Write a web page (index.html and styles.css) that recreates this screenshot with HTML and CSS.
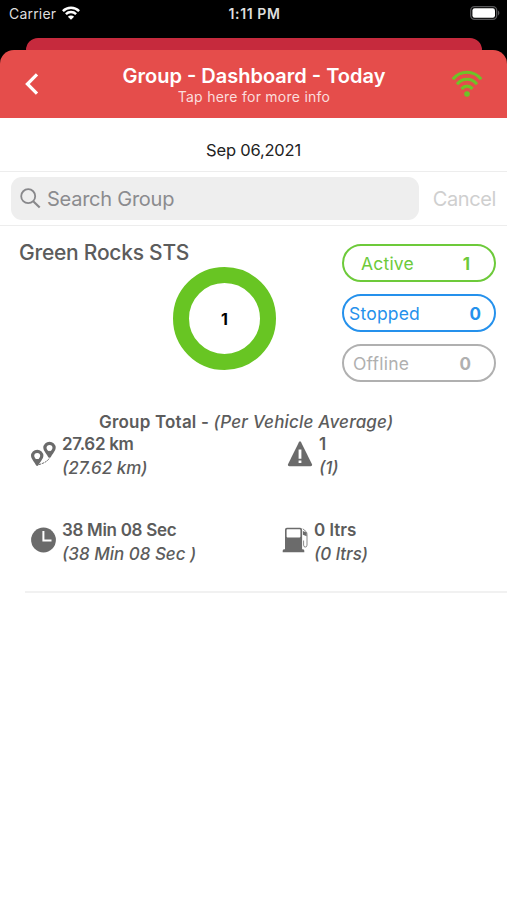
FILE: index.html
```html
<!DOCTYPE html>
<html lang="en">
<head>
    <meta charset="UTF-8">
    <meta name="viewport" content="width=device-width, initial-scale=1.0">
    <title>Group - Dashboard - Today</title>
    <link rel="stylesheet" href="styles.css">
</head>
<body>
    <div class="screen">
        <div class="status-bar">
            <div class="carrier">
                <span class="carrier-name">Carrier</span>
                <svg class="status-wifi" width="18" height="14" viewBox="0 0 18 14" fill="none" stroke="#fff" stroke-width="2.5">
                    <path d="M.9 5.1a11.6 11.6 0 0 1 16.2 0"/>
                    <path d="M3.9 8.2a7.3 7.3 0 0 1 10.2 0"/>
                    <path d="M9 13.8 5.9 10.7a4.4 4.4 0 0 1 6.2 0z" fill="#fff" stroke="none"/>
                </svg>
            </div>
            <span class="time">1:11 PM</span>
            <svg class="battery" width="30" height="14" viewBox="0 0 30 14">
                <rect x=".7" y=".7" width="26" height="12.6" rx="3.8" fill="none" stroke="#58585a" stroke-width="1.3"/>
                <rect x="2.4" y="2.3" width="22.6" height="9.4" rx="2.2" fill="#fff"/>
                <path d="M28 4.6c1.8.7 1.8 4.1 0 4.8z" fill="#58585a"/>
            </svg>
        </div>

        <div class="back-card"></div>

        <header class="nav">
            <svg class="nav-back" width="14" height="22" viewBox="0 0 14 22" fill="none" stroke="#fff" stroke-width="3.2">
                <path d="M12 1.4 2.4 11l9.6 9.6"/>
            </svg>
            <div class="nav-titles">
                <h1 class="nav-title">Group - Dashboard - Today</h1>
                <span class="nav-subtitle">Tap here for more info</span>
            </div>
            <svg class="nav-wifi" width="32" height="28" viewBox="0 0 32 28" fill="none" stroke="#6ec328" stroke-width="3.2">
                <path d="M1.8 9.2C9.6-.1 22.4-.1 30.2 9.2"/>
                <path d="M6 14.2c5.8-6.600 14.200-6.600 20 0"/>
                <path d="M10.500 18.800c3.300-3.600 7.700-3.600 11 0"/>
                <circle cx="16" cy="24" r="2.800" fill="#6ec328" stroke="none"/>
            </svg>
        </header>

        <div class="date"><span class="date-text">Sep 06,2021</span></div>

        <div class="search">
            <div class="search-field">
                <svg width="21" height="21" viewBox="0 0 21 21" fill="none" stroke="#88888b" stroke-width="1.8">
                    <circle cx="8.2" cy="8.2" r="7"/>
                    <path d="m13.2 13.2 6.5 6.3" stroke-width="2.2"/>
                </svg>
                <span class="search-text">Search Group</span>
            </div>
            <span class="cancel">Cancel</span>
        </div>

        <main class="group">
            <div class="overview">
                <h2 class="group-name">Green Rocks STS</h2>
                <div class="donut"><span>1</span></div>
                <div class="pills">
                    <div class="pill active"><span>Active</span><b>1</b></div>
                    <div class="pill stopped"><span>Stopped</span><b>0</b></div>
                    <div class="pill offline"><span>Offline</span><b>0</b></div>
                </div>
            </div>

            <p class="total-title"><b>Group Total - </b><i>(Per Vehicle Average)</i></p>

            <div class="stats">
                <div class="stat distance">
                    <svg width="26" height="26" viewBox="0 0 26 26" fill="none" stroke="#6b6b6b">
                        <path stroke-width="3.2" stroke-linejoin="round" d="M7.200 10.400a4.600 4.600 0 0 0-4.600 4.600c0 3 3.200 4.600 4.600 8.300 1.400-3.700 4.600-5.300 4.600-8.300a4.600 4.600 0 0 0-4.600-4.600z"/>
                        <path stroke-width="3.2" stroke-linejoin="round" d="M19.500 2.300a4.600 4.600 0 0 0-4.600 4.600c0 3 3.200 4.600 4.600 8.300 1.400-3.700 4.600-5.300 4.600-8.300a4.600 4.600 0 0 0-4.600-4.600z"/>
                        <path d="M5 18.500h4.400L7.200 23zM17.300 10.400h4.400l-2.200 4.500z" fill="#6b6b6b"/>
                        <path d="M9 23.600c5-1.500 8.500-3.200 10.400-6.500" stroke-dasharray="2.200 .8"/>
                    </svg>
                    <div class="stat-text"><b>27.62 km</b><i>(27.62 km)</i></div>
                </div>
                <div class="stat alerts">
                    <svg width="26" height="26" viewBox="0 0 26 26">
                        <path d="M11.900 1.200q1.100-1.700 2.200 0L25 23.200q.6 2-1.300 2H2.300q-1.900 0-1.300-2z" fill="#6b6b6b"/>
                        <path d="M11.600 8.500h2.800v9.200h-2.800zM11.600 19.400h2.800v2.600h-2.800z" fill="#fff"/>
                    </svg>
                    <div class="stat-text"><b>1</b><i>(1)</i></div>
                </div>
                <div class="stat duration">
                    <svg width="26" height="26" viewBox="0 0 26 26">
                        <circle cx="13.500" cy="13" r="12.400" fill="#6b6b6b"/>
                        <path d="M13.400 4v9.400h8.100" fill="none" stroke="#fff" stroke-width="2"/>
                    </svg>
                    <div class="stat-text"><b>38 Min 08 Sec</b><i>(38 Min 08 Sec )</i></div>
                </div>
                <div class="stat fuel">
                    <svg width="26" height="26" viewBox="0 0 26 26" fill="#6b6b6b">
                        <path fill-rule="evenodd" d="M4.900.8h13.200q2 0 2 2v19.400h.9q1.300 0 1.300 1.500v1.600H.7v-1.600q0-1.500 1.300-1.500h1V2.800q0-2 1.900-2zM5.300 2.200q-.7 0-.7.8v6.600q0 .8.700.8h12.400q.7 0 .7-.8V3q0-.8-.7-.8z"/>
                        <path d="m20.800 1.800 3.300 2.800q.9 1 .9 2.800v10.800q-.2 2-1.900 1.900-1.500-.2-1.500-2v-4.600" fill="none" stroke="#6b6b6b" stroke-width=".8"/>
                        <path d="M20.900 4 24.600 5.400v3.900l-3.700-1.500z"/>
                    </svg>
                    <div class="stat-text"><b>0 ltrs</b><i>(0 ltrs)</i></div>
                </div>
            </div>
        </main>
    </div>
</body>
</html>
```
FILE: styles.css
```css
* {
    box-sizing: border-box;
}

body {
    margin: 0;
    background: #fff;
    font-family: Inter, Roboto, sans-serif;
    color: #5c5c5c;
}

h1, h2, p {
    margin: 0;
}

svg {
    display: block;
    flex-shrink: 0;
}

.screen {
    width: 507px;
    height: 900px;
    overflow: hidden;
    white-space: nowrap;
    background: linear-gradient(#000 0 70px, #fff 70px);
}

/* status bar */
.status-bar {
    display: grid;
    grid-template-columns: 1fr auto 1fr;
    align-items: center;
    height: 38px;
    padding: 0 7px 12px 9px;
    font-size: 14px;
    color: #dedede;
}

.carrier {
    display: flex;
    align-items: center;
    gap: 6px;
}

.carrier-name {
    letter-spacing: 0.2px;
}

.time {
    font-weight: 600;
    letter-spacing: 0.6px;
}

.battery {
    justify-self: end;
}

/* header */
.back-card {
    height: 12px;
    margin: 0 25px 0 26px;
    border-radius: 12px 12px 0 0;
    background: #c62a3d;
}

.nav {
    display: flex;
    align-items: center;
    justify-content: space-between;
    height: 68px;
    padding: 0 24px 0 25px;
    border-radius: 14px 14px 0 0;
    background: #e54d4b;
    color: #fff;
}

.nav-titles {
    display: flex;
    flex-direction: column;
    align-items: center;
    margin-left: 18px;
}

.nav-title {
    font-size: 20px;
    line-height: 24px;
    padding-top: 1px;
    font-weight: 600;
}

.nav-subtitle {
    font-size: 14px;
    line-height: 18px;
    letter-spacing: 0.25px;
    color: #fbdedd;
}

.date {
    display: flex;
    align-items: center;
    justify-content: center;
    height: 54px;
    padding-top: 11px;
    border-bottom: 1px solid #ededed;
    font-size: 16.5px;
    letter-spacing: -0.2px;
    color: #222;
}

.search {
    display: flex;
    align-items: center;
    justify-content: space-between;
    height: 54px;
    padding: 0 11px;
    border-bottom: 1px solid #ededed;
}

.search-field {
    display: flex;
    align-items: center;
    gap: 6px;
    width: 408px;
    height: 43px;
    padding-left: 9px;
    border-radius: 11px;
    background: #eee;
    font-size: 20px;
    letter-spacing: -0.25px;
    color: #8b8b8e;
}

.cancel {
    font-size: 20px;
    letter-spacing: -0.4px;
    color: #cfcfcf;
}

/* group */
.group {
    margin-left: 25px;
    height: 367px;
    border-bottom: 2px solid #f1f1f1;
}

.overview {
    display: grid;
    grid-template-columns: 148px 103px 1fr;
    height: 174px;
    padding: 18px 11px 0 0;
}

.group-name {
    margin: -5px 0 0 -6px;
    font-size: 21px;
    line-height: 28px;
    letter-spacing: -0.25px;
    font-weight: 500;
}

.donut {
    display: flex;
    align-items: center;
    justify-content: center;
    width: 103px;
    height: 103px;
    margin-top: 23px;
    border: 16px solid #68c523;
    border-radius: 50%;
    font-size: 16px;
    font-weight: 700;
    color: #000;
}

.pills {
    display: flex;
    flex-direction: column;
    gap: 12px;
    width: 154px;
    justify-self: end;
}

.pill {
    display: flex;
    align-items: baseline;
    justify-content: space-between;
    height: 38px;
    border: 2px solid;
    border-radius: 19px;
    font-size: 17.5px;
    line-height: 35px;
    letter-spacing: 0.2px;
}

.pill b {
    font-size: 17px;
    letter-spacing: 0;
}

.active {
    padding: 0 24px 0 17px;
    color: #6dca3a;
}

.stopped {
    padding: 0 13px 0 5px;
    color: #2591ec;
}

.offline {
    padding: 0 23px 0 9px;
    color: #b0b0b0;
}

.total-title {
    padding: 11px 0 0 74px;
    font-size: 17px;
    line-height: 22px;
    letter-spacing: 0.2px;
}

.total-title b,
.stat-text b {
    font-weight: 600;
}

.total-title i,
.stat-text i {
    font-weight: 500;
}

.stats {
    display: grid;
    grid-template-columns: 252px 1fr;
    grid-auto-rows: 86px;
}

.stat {
    display: flex;
    align-items: flex-start;
    gap: 6px;
    padding-left: 5px;
    font-size: 17px;
}

.stat svg {
    margin-top: 8px;
}

.stat-text {
    display: flex;
    flex-direction: column;
    line-height: 24px;
    margin-top: -1px;
}

.stat-text b {
    letter-spacing: -0.3px;
}

.alerts {
    padding-left: 10px;
}

.fuel {
    padding-left: 5px;
}

.fuel b {
    letter-spacing: 0;
}
```
